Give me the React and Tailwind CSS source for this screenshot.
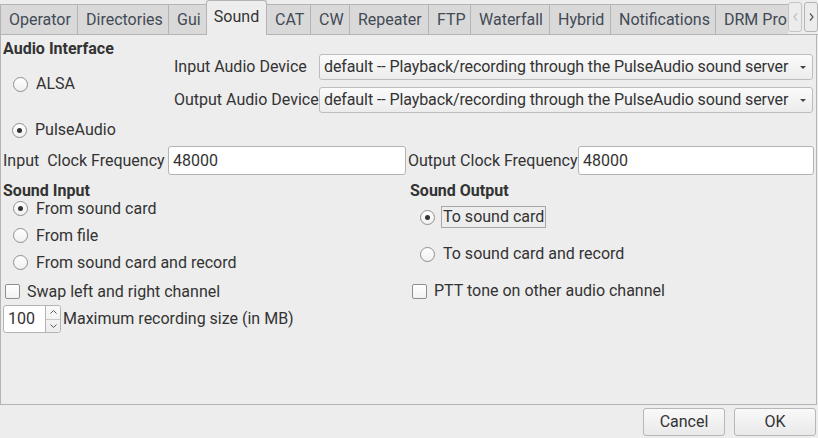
import React from 'react';

const tabs = [
  { label: 'Operator', w: 77 },
  { label: 'Directories', w: 91 },
  { label: 'Gui', w: 38 },
  { label: 'Sound', w: 60, active: true },
  { label: 'CAT', w: 44 },
  { label: 'CW', w: 39 },
  { label: 'Repeater', w: 79 },
  { label: 'FTP', w: 42 },
  { label: 'Waterfall', w: 79 },
  { label: 'Hybrid', w: 61 },
  { label: 'Notifications', w: 105 },
  { label: 'DRM Pro', w: 73 },
];

const Radio = ({ checked }) => (
  <span className="w-[15px] h-[15px] rounded-full border border-[#8f8f8f] bg-gradient-to-b from-white to-[#f0f0f0] flex items-center justify-center shrink-0">
    {checked && <span className="w-[5px] h-[5px] rounded-full bg-[#333]" />}
  </span>
);

const Check = () => (
  <span className="w-[15px] h-[15px] rounded-[2px] border border-[#8f8f8f] bg-gradient-to-b from-white to-[#f2f2f2] shrink-0" />
);

const Combo = ({ text }) => (
  <div className="w-[494px] h-[26px] rounded-[3px] border border-[#bdbdbd] bg-gradient-to-b from-[#fbfbfb] to-[#ececec] flex items-center pl-[4px] pr-[6px]">
    <span className="flex-1 whitespace-nowrap overflow-hidden tracking-[-0.1px]">{text}</span>
    <span className="w-0 h-0 border-l-[3px] border-r-[3px] border-t-[3px] border-l-transparent border-r-transparent border-t-[#444]" />
  </div>
);

const Field = ({ w, value }) => (
  <div className={`${w} h-[29px] rounded-[3px] border border-[#b3b3b3] bg-white flex items-center pl-[4px]`}>
    {value}
  </div>
);

const Btn = ({ children }) => (
  <div className="w-[82px] h-[28px] rounded-[3px] border border-[#b7b7b7] bg-gradient-to-b from-[#f9f9f9] to-[#e9e9e9] flex items-center justify-center">
    {children}
  </div>
);

const device = 'default -- Playback/recording through the PulseAudio sound server';

export default function App() {
  return (
    <div
      className="w-[818px] h-[438px] bg-[#ededed] text-[#333] text-[16px] leading-[18px] overflow-hidden"
      style={{ fontFamily: 'Roboto, "Liberation Sans", sans-serif' }}
    >
      {/* tab bar */}
      <div className="flex items-end h-[35px] relative z-10">
        {tabs.map((t) =>
          t.active ? (
            <div
              key={t.label}
              style={{ width: t.w + 1 }}
              className="h-[35px] -mr-[1px] rounded-t-[3px] border border-b-0 border-[#b4b4b4] bg-[#ededed] flex items-center justify-center pb-[2px] text-[#333]"
            >
              {t.label}
            </div>
          ) : (
            <div
              key={t.label}
              style={{ width: t.w }}
              className="h-[31px] border-t border-l border-b border-[#b4b4b4] bg-[#d9d9d9] flex items-center pl-[8px] text-[#424a55] whitespace-nowrap overflow-hidden"
            >
              {t.label}
            </div>
          )
        )}
        <div className="flex gap-[2px] items-start h-[35px] pt-[2px] border-b border-[#b4b4b4] flex-1">
          <div className="w-[14px] h-[30px] rounded-[3px] border border-[#c4c4c4] bg-[#ececec] flex items-center justify-center">
            <svg width="5" height="8" viewBox="0 0 5 8"><path d="M4 0.5 L1 4 L4 7.5" fill="none" stroke="#c0c0c0" strokeWidth="1.2" /></svg>
          </div>
          <div className="w-[14px] h-[30px] rounded-[3px] border border-[#b4b4b4] bg-[#ececec] flex items-center justify-center">
            <svg width="5" height="8" viewBox="0 0 5 8"><path d="M1 0.5 L4 4 L1 7.5" fill="none" stroke="#555" strokeWidth="1.2" /></svg>
          </div>
        </div>
      </div>

      {/* panel */}
      <div className="w-[817px] h-[371px] -mt-[1px] border border-t-0 border-[#b4b4b4] pt-[3px]">
        <div className="flex">
          <div className="w-[171px] pl-[2px]">
            <div className="mt-[3px] font-bold">Audio Interface</div>
            <div className="mt-[16px] h-[20px] flex items-center pl-[10px] gap-[8px]">
              <Radio />
              <span>ALSA</span>
            </div>
          </div>
          <div className="pt-[17px] flex flex-col gap-[7px]">
            <div className="flex items-center">
              <span className="w-[147px] pl-[2px]">Input Audio Device</span>
              <Combo text={device} />
            </div>
            <div className="flex items-center">
              <span className="w-[147px] pl-[2px] whitespace-nowrap">Output Audio Device</span>
              <Combo text={device} />
            </div>
          </div>
        </div>

        <div className="mt-[7px] h-[20px] flex items-center pl-[11px] gap-[8px]">
          <Radio checked />
          <span>PulseAudio</span>
        </div>

        <div className="mt-[6px] flex items-center">
          <span className="w-[167px] pl-[2px] whitespace-pre">Input  Clock Frequency</span>
          <Field w="w-[238px]" value="48000" />
          <span className="w-[172px] pl-[2px] whitespace-nowrap">Output Clock Frequency</span>
          <Field w="w-[236px]" value="48000" />
        </div>

        <div className="flex mt-[7px]">
          <div className="w-[408px] pl-[2px]">
            <div className="h-[13px] font-bold">Sound Input</div>
            <div className="h-[27px] flex items-center pl-[10px] gap-[8px]">
              <Radio checked />
              <span>From sound card</span>
            </div>
            <div className="h-[27px] flex items-center pl-[10px] gap-[8px]">
              <Radio />
              <span>From file</span>
            </div>
            <div className="h-[27px] flex items-center pl-[10px] gap-[8px]">
              <Radio />
              <span>From sound card and record</span>
            </div>
            <div className="mt-[2px] h-[27px] flex items-center pl-[2px] gap-[7px]">
              <Check />
              <span>Swap left and right channel</span>
            </div>
            <div className="flex items-center gap-[2px]">
              <div className="w-[58px] h-[28px] rounded-[3px] border border-[#b3b3b3] bg-white flex">
                <span className="flex-1 flex items-center pl-[4px]">100</span>
                <div className="w-[15px] border-l border-[#b3b3b3] bg-gradient-to-b from-[#fafafa] to-[#ececec] flex flex-col rounded-r-[3px]">
                  <span className="flex-1 flex items-center justify-center border-b border-[#c8c8c8]">
                    <svg width="7" height="4" viewBox="0 0 7 4"><path d="M0.5 3.5 L3.5 0.5 L6.5 3.5" fill="none" stroke="#555" strokeWidth="1" /></svg>
                  </span>
                  <span className="flex-1 flex items-center justify-center">
                    <svg width="7" height="4" viewBox="0 0 7 4"><path d="M0.5 0.5 L3.5 3.5 L6.5 0.5" fill="none" stroke="#555" strokeWidth="1" /></svg>
                  </span>
                </div>
              </div>
              <span>Maximum recording size (in MB)</span>
            </div>
          </div>
          <div className="flex-1">
            <div className="h-[13px] font-bold pl-[1px]">Sound Output</div>
            <div className="mt-[9px] h-[26px] flex items-center pl-[11px] gap-[6px]">
              <Radio checked />
              <span className="border border-[#a8a8a8] px-[1px] h-[22px] flex items-center">To sound card</span>
            </div>
            <div className="mt-[11px] h-[26px] flex items-center pl-[11px] gap-[8px]">
              <Radio />
              <span>To sound card and record</span>
            </div>
            <div className="mt-[14px] h-[20px] flex items-center pl-[3px] gap-[7px]">
              <Check />
              <span>PTT tone on other audio channel</span>
            </div>
          </div>
        </div>
      </div>

      {/* buttons */}
      <div className="flex justify-end gap-[9px] pr-[2px] pt-[3px]">
        <Btn>Cancel</Btn>
        <Btn>OK</Btn>
      </div>
    </div>
  );
}
